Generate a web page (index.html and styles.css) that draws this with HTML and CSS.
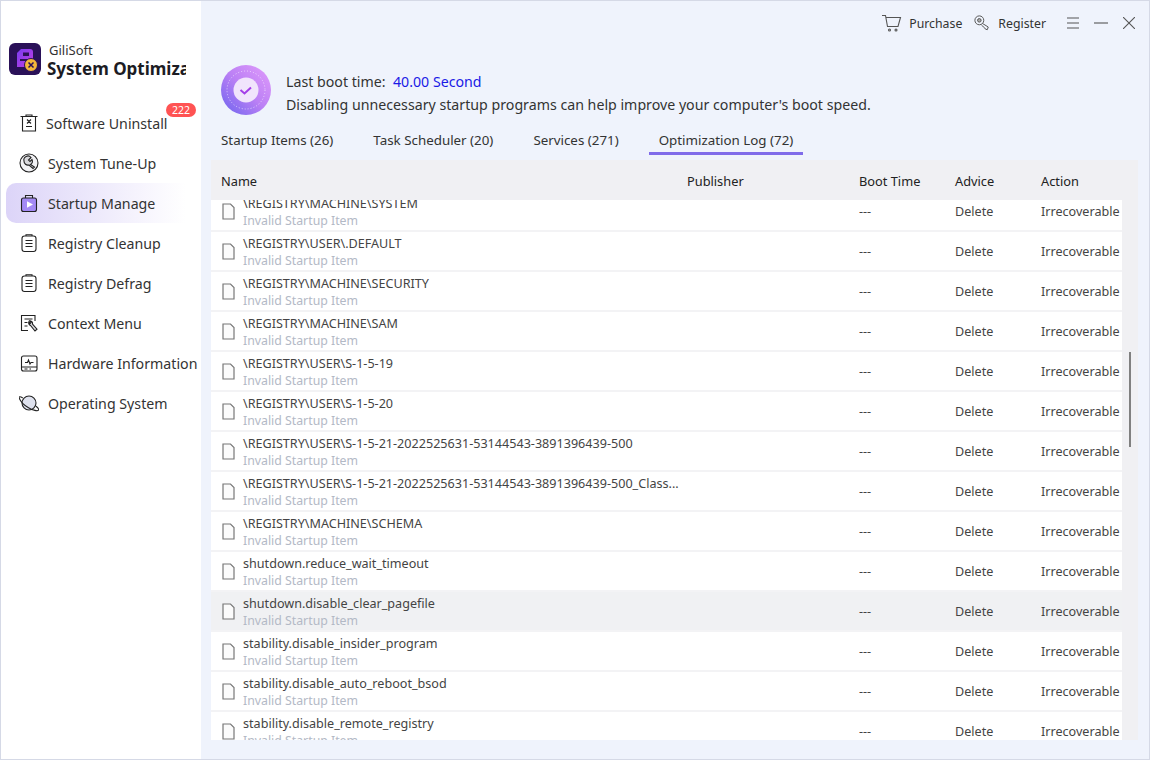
FILE: index.html
```html
<!DOCTYPE html>
<html>
<head>
  <meta charset="UTF-8">
  <link rel="stylesheet" href="styles.css">
</head>
<body>
  <svg class="sprites" width="0" height="0">
    <symbol id="file" viewBox="0 0 13 17"><path d="M1 1h7.500L12 4.500V16H1z" fill="#fbfbfb" stroke="#777" stroke-width="1.200"/></symbol>
  </svg>
  <div class="app">
    <aside class="sidebar">
      <div class="brand">
        <svg class="brand-logo" width="32" height="32" viewBox="0 0 32 32">
          <defs>
            <linearGradient id="doc" x1="0" y1="0" x2="1" y2="1">
              <stop offset="0" stop-color="#7a3cf2"/>
              <stop offset="1" stop-color="#c13fe0"/>
            </linearGradient>
          </defs>
          <rect width="32" height="32" rx="6" fill="#2a1158"/>
          <path d="M12 6h9a3 3 0 0 1 3 3v15H8V10z" fill="url(#doc)"/>
          <path d="M14 9.500h6v3.500h-6zM11 16h7v2h-7z" fill="#2a1158"/>
          <circle cx="22" cy="22" r="6.500" fill="#f3b73a" stroke="#2a1158"/>
          <path d="M19.500 19.500l5 5M24.500 19.500l-5 5" stroke="#2a1158" stroke-width="1.500"/>
        </svg>
        <div class="brand-text">
          <div class="brand-company">GiliSoft</div>
          <div class="brand-name">System Optimization</div>
        </div>
      </div>
      <nav class="nav">
        <a class="nav-item nav-first">
          <svg class="nav-icon" viewBox="0 0 20 20" fill="none" stroke="#222" stroke-width="1.100"><path d="M1.500 3.500h17M7 3.500V2h6v1.500M3.500 3.500V18h13V3.500M8 6.500l4 4M12 6.500l-4 4M7 13.500h6"/></svg>
          <span>Software Uninstall</span>
          <span class="badge">222</span>
        </a>
        <a class="nav-item">
          <svg class="nav-icon" viewBox="0 0 20 20" fill="none" stroke="#222" stroke-width="1.100"><circle cx="10" cy="10" r="9" fill="#f2f2f5"/><path d="M12 4.500L9.500 7 11 8.500l2-2a4 4 0 0 1-1.500 5l4 2.500-1.500 1.500-4-3.500A4 4 0 0 1 5 8a4 4 0 0 1 7-3.500z" fill="#d8d8dc"/></svg>
          <span>System Tune-Up</span>
        </a>
        <a class="nav-item active">
          <svg class="nav-icon" viewBox="0 0 20 20" fill="none" stroke="#222" stroke-width="1.100"><path d="M6.500 5V2.500h7V5"/><rect x="2.500" y="5" width="15" height="13.500" rx="2" fill="#a48af5"/><path d="M8 8.200l6 3.300-6 3.300z" fill="#fff" stroke="none"/></svg>
          <span>Startup Manage</span>
        </a>
        <a class="nav-item">
          <svg class="nav-icon" viewBox="0 0 20 20" fill="none" stroke="#222" stroke-width="1.100"><rect x="3" y="3" width="14" height="15.500" rx="2.500"/><path d="M7 3V1.800h6V3M6.500 7.500h7M6.500 10.500h7M6.500 13.500h7"/></svg>
          <span>Registry Cleanup</span>
        </a>
        <a class="nav-item">
          <svg class="nav-icon" viewBox="0 0 20 20" fill="none" stroke="#222" stroke-width="1.100"><rect x="3" y="3" width="14" height="15.500" rx="2.500"/><path d="M7 3V1.800h6V3M6.500 7.500h7M6.500 10.500h7M6.500 13.500h7"/></svg>
          <span>Registry Defrag</span>
        </a>
        <a class="nav-item">
          <svg class="nav-icon" viewBox="0 0 20 20" fill="none" stroke="#222" stroke-width="1.100"><path d="M16 8V2.500H2.500v15H9M5.500 6h8M5.500 9.500h3M5.500 13h3"/><path d="M10 8.500a2.800 2.800 0 0 0 1.500 4l4.500 5.500 2-1.800-4.500-5a2.800 2.800 0 0 0-2.500-3.500l1 2-1 1z" fill="#d8d8dc"/></svg>
          <span>Context Menu</span>
        </a>
        <a class="nav-item">
          <svg class="nav-icon" viewBox="0 0 20 20" fill="none" stroke="#222" stroke-width="1.100"><rect x="2.500" y="3" width="15.500" height="15" rx="2"/><path d="M2.500 14h15.500M5.500 16h3M10.500 16h1.500M6 9.500h2.500l1-2.500 1.500 4 1-1.500h2.500"/></svg>
          <span>Hardware Information</span>
        </a>
        <a class="nav-item">
          <svg class="nav-icon" viewBox="0 0 20 20" fill="none" stroke="#222" stroke-width="1.100"><circle cx="10" cy="10" r="7" fill="#dfe2ee"/><path d="M3.800 5C1 3.200-.3 3.300.3 5.200c1 3 4.800 7 9.200 9.500 4.500 2.600 9.300 3.800 10 2.300.4-1-.7-2.500-2.500-3.800"/></svg>
          <span>Operating System</span>
        </a>
      </nav>
    </aside>

    <main class="main">
      <header class="titlebar">
        <a class="title-link link-purchase">
          <svg width="20" height="18" viewBox="0 0 20 18" fill="none" stroke="#555" stroke-width="1.100"><path d="M0 1.500h3.500l2 11h10.500l2.500-9H4"/><circle cx="7.500" cy="16" r="1"/><circle cx="14" cy="16" r="1"/></svg>
          <span>Purchase</span>
        </a>
        <a class="title-link">
          <svg width="16" height="18" viewBox="0 0 18 18" fill="none" stroke="#555" stroke-width="1.100"><circle cx="6" cy="6" r="5"/><circle cx="6" cy="6" r="2" fill="#aaa"/><path d="M9.500 9.500l6.500 4-1 3-2-.5-1-1.500-3.500-3"/></svg>
          <span>Register</span>
        </a>
        <div class="win-buttons">
          <svg width="12" height="12" viewBox="0 0 12 12" stroke="#555" stroke-width="1.100"><path d="M0 1h12M0 6h12M0 11h12"/></svg>
          <svg width="14" height="12" viewBox="0 0 14 12" stroke="#555" stroke-width="1.100"><path d="M0 6h14"/></svg>
          <svg width="12" height="12" viewBox="0 0 12 12" stroke="#555" stroke-width="1.100"><path d="M0 0l12 12M12 0L0 12"/></svg>
        </div>
      </header>

      <section class="summary">
        <svg class="summary-icon" width="50" height="50" viewBox="0 0 50 50">
          <defs>
            <linearGradient id="ring" x1="0" y1="1" x2="1" y2="0">
              <stop offset="0" stop-color="#6a63ee"/>
              <stop offset="0.500" stop-color="#bb80f5"/>
              <stop offset="1" stop-color="#e29cfb"/>
            </linearGradient>
          </defs>
          <circle cx="25" cy="25" r="25" fill="url(#ring)"/>
          <circle cx="25" cy="25" r="19" fill="none" stroke="#fff" stroke-opacity=".6" stroke-dasharray="1 2"/>
          <circle cx="25" cy="25" r="12.500" fill="#f1e4fc"/>
          <path d="M19.500 25l4 3.500 6.500-6" fill="none" stroke="#a43de8" stroke-width="2"/>
        </svg>
        <div class="summary-text">
          <div>Last boot time:&nbsp; <span class="boot-value">40.00 Second</span></div>
          <div>Disabling unnecessary startup programs can help improve your computer's boot speed.</div>
        </div>
      </section>

      <div class="tabs">
        <a class="tab">Startup Items (26)</a>
        <a class="tab">Task Scheduler (20)</a>
        <a class="tab">Services (271)</a>
        <a class="tab active">Optimization Log (72)</a>
      </div>

      <section class="table">
        <div class="table-head">
          <div class="col-name">Name</div>
          <div class="col-publisher">Publisher</div>
          <div class="col-boot">Boot Time</div>
          <div class="col-advice">Advice</div>
          <div class="col-action">Action</div>
        </div>
        <div class="table-body">
          <div class="row">
            <div class="col-name cell-name"><svg class="file-icon"><use href="#file"/></svg><div><div class="item-name">\REGISTRY\MACHINE\SYSTEM</div><div class="item-sub">Invalid Startup Item</div></div></div>
            <div class="col-publisher"></div><div class="col-boot">---</div><div class="col-advice">Delete</div><div class="col-action">Irrecoverable</div>
          </div>
          <div class="row">
            <div class="col-name cell-name"><svg class="file-icon"><use href="#file"/></svg><div><div class="item-name">\REGISTRY\USER\.DEFAULT</div><div class="item-sub">Invalid Startup Item</div></div></div>
            <div class="col-publisher"></div><div class="col-boot">---</div><div class="col-advice">Delete</div><div class="col-action">Irrecoverable</div>
          </div>
          <div class="row">
            <div class="col-name cell-name"><svg class="file-icon"><use href="#file"/></svg><div><div class="item-name">\REGISTRY\MACHINE\SECURITY</div><div class="item-sub">Invalid Startup Item</div></div></div>
            <div class="col-publisher"></div><div class="col-boot">---</div><div class="col-advice">Delete</div><div class="col-action">Irrecoverable</div>
          </div>
          <div class="row">
            <div class="col-name cell-name"><svg class="file-icon"><use href="#file"/></svg><div><div class="item-name">\REGISTRY\MACHINE\SAM</div><div class="item-sub">Invalid Startup Item</div></div></div>
            <div class="col-publisher"></div><div class="col-boot">---</div><div class="col-advice">Delete</div><div class="col-action">Irrecoverable</div>
          </div>
          <div class="row">
            <div class="col-name cell-name"><svg class="file-icon"><use href="#file"/></svg><div><div class="item-name">\REGISTRY\USER\S-1-5-19</div><div class="item-sub">Invalid Startup Item</div></div></div>
            <div class="col-publisher"></div><div class="col-boot">---</div><div class="col-advice">Delete</div><div class="col-action">Irrecoverable</div>
          </div>
          <div class="row">
            <div class="col-name cell-name"><svg class="file-icon"><use href="#file"/></svg><div><div class="item-name">\REGISTRY\USER\S-1-5-20</div><div class="item-sub">Invalid Startup Item</div></div></div>
            <div class="col-publisher"></div><div class="col-boot">---</div><div class="col-advice">Delete</div><div class="col-action">Irrecoverable</div>
          </div>
          <div class="row">
            <div class="col-name cell-name"><svg class="file-icon"><use href="#file"/></svg><div><div class="item-name">\REGISTRY\USER\S-1-5-21-2022525631-53144543-3891396439-500</div><div class="item-sub">Invalid Startup Item</div></div></div>
            <div class="col-publisher"></div><div class="col-boot">---</div><div class="col-advice">Delete</div><div class="col-action">Irrecoverable</div>
          </div>
          <div class="row">
            <div class="col-name cell-name"><svg class="file-icon"><use href="#file"/></svg><div><div class="item-name">\REGISTRY\USER\S-1-5-21-2022525631-53144543-3891396439-500_Class...</div><div class="item-sub">Invalid Startup Item</div></div></div>
            <div class="col-publisher"></div><div class="col-boot">---</div><div class="col-advice">Delete</div><div class="col-action">Irrecoverable</div>
          </div>
          <div class="row">
            <div class="col-name cell-name"><svg class="file-icon"><use href="#file"/></svg><div><div class="item-name">\REGISTRY\MACHINE\SCHEMA</div><div class="item-sub">Invalid Startup Item</div></div></div>
            <div class="col-publisher"></div><div class="col-boot">---</div><div class="col-advice">Delete</div><div class="col-action">Irrecoverable</div>
          </div>
          <div class="row">
            <div class="col-name cell-name"><svg class="file-icon"><use href="#file"/></svg><div><div class="item-name">shutdown.reduce_wait_timeout</div><div class="item-sub">Invalid Startup Item</div></div></div>
            <div class="col-publisher"></div><div class="col-boot">---</div><div class="col-advice">Delete</div><div class="col-action">Irrecoverable</div>
          </div>
          <div class="row hover">
            <div class="col-name cell-name"><svg class="file-icon"><use href="#file"/></svg><div><div class="item-name">shutdown.disable_clear_pagefile</div><div class="item-sub">Invalid Startup Item</div></div></div>
            <div class="col-publisher"></div><div class="col-boot">---</div><div class="col-advice">Delete</div><div class="col-action">Irrecoverable</div>
          </div>
          <div class="row">
            <div class="col-name cell-name"><svg class="file-icon"><use href="#file"/></svg><div><div class="item-name">stability.disable_insider_program</div><div class="item-sub">Invalid Startup Item</div></div></div>
            <div class="col-publisher"></div><div class="col-boot">---</div><div class="col-advice">Delete</div><div class="col-action">Irrecoverable</div>
          </div>
          <div class="row">
            <div class="col-name cell-name"><svg class="file-icon"><use href="#file"/></svg><div><div class="item-name">stability.disable_auto_reboot_bsod</div><div class="item-sub">Invalid Startup Item</div></div></div>
            <div class="col-publisher"></div><div class="col-boot">---</div><div class="col-advice">Delete</div><div class="col-action">Irrecoverable</div>
          </div>
          <div class="row">
            <div class="col-name cell-name"><svg class="file-icon"><use href="#file"/></svg><div><div class="item-name">stability.disable_remote_registry</div><div class="item-sub">Invalid Startup Item</div></div></div>
            <div class="col-publisher"></div><div class="col-boot">---</div><div class="col-advice">Delete</div><div class="col-action">Irrecoverable</div>
          </div>
        </div>
        <div class="scrollbar"><div class="scroll-thumb"></div></div>
      </section>
    </main>
  </div>
</body>
</html>
```

FILE: styles.css
```css
* {
  box-sizing: border-box;
}

body {
  margin: 0;
  width: 1150px;
  height: 760px;
  overflow: hidden;
  font-family: "Noto Sans", "Noto Sans CJK SC", sans-serif;
  font-size: 14.2px;
  color: #333;
  background: #eff3fc;
}

.sprites {
  display: block;
}

.app {
  display: flex;
  height: 760px;
  border: 1px solid #d5d9e6;
}

.sidebar {
  width: 200px;
  flex-shrink: 0;
  background: #ffffff;
}

.brand {
  display: flex;
  align-items: flex-start;
  gap: 6px;
  padding: 42px 0 0 8px;
}

.brand-logo {
  flex-shrink: 0;
}

.brand-text {
  width: 139px;
  margin-top: -1px;
  overflow: hidden;
}

.brand-company {
  font-size: 13px;
  line-height: 17px;
  padding-left: 2px;
}

.brand-name {
  font-size: 17px;
  font-weight: 700;
  line-height: 20px;
  color: #1c1c24;
  white-space: nowrap;
}

.nav {
  padding: 24px 0 0 5px;
}

.nav-item {
  position: relative;
  display: flex;
  align-items: center;
  gap: 9px;
  height: 40px;
  padding-left: 13px;
  white-space: nowrap;
}

.nav-icon {
  width: 20px;
  height: 20px;
  flex-shrink: 0;
}

.nav-first {
  gap: 7px;
}

.nav-item.active {
  background: linear-gradient(90deg, #dcd4f8, #ffffff 92%);
  border-radius: 10px 0 0 10px;
}

.badge {
  position: absolute;
  left: 160px;
  top: 0;
  width: 30px;
  height: 14px;
  line-height: 14px;
  border-radius: 7px;
  background: #ff5353;
  color: #fff;
  font-size: 10.5px;
  text-align: center;
}

.main {
  flex: 1;
  min-width: 0;
  padding: 0 0 19px 10px;
  display: flex;
  flex-direction: column;
}

.titlebar {
  display: flex;
  justify-content: flex-end;
  align-items: center;
  height: 44px;
  flex-shrink: 0;
  gap: 12px;
  padding-right: 14px;
  font-size: 12.3px;
}

.title-link {
  display: flex;
  align-items: center;
  gap: 8px;
}

.link-purchase {
  gap: 7px;
}

.win-buttons {
  display: flex;
  gap: 15px;
  margin-left: 9px;
}

.summary {
  display: flex;
  align-items: flex-start;
  gap: 15px;
  flex-shrink: 0;
  padding: 20px 0 0 10px;
}

.summary-text {
  line-height: 23px;
  margin-top: 5px;
}

.boot-value {
  color: #1a1ae6;
}

.tabs {
  display: flex;
  flex-shrink: 0;
  height: 44px;
  padding-top: 9px;
  font-size: 13.35px;
}

.tab {
  height: 30px;
  line-height: 30px;
  padding: 0 10px;
  margin-right: 20px;
}

.tab.active {
  border-bottom: 3px solid #7f6bea;
}

.table {
  position: relative;
  flex: 1;
  min-height: 0;
  width: 927px;
  display: flex;
  flex-direction: column;
  background: #f0f0f3;
  overflow: hidden;
}

.table-head {
  display: flex;
  align-items: center;
  height: 40px;
  padding-top: 2px;
  flex-shrink: 0;
  color: #222;
  font-size: 12.8px;
}

.table-body {
  flex: 1;
  min-height: 0;
  overflow: hidden;
  width: 911px;
  background: #fff;
}

.row {
  display: flex;
  align-items: center;
  height: 40px;
  border-bottom: 2px solid #f3f3f5;
  font-size: 12.6px;
  color: #444;
}

.row:first-child {
  margin-top: -8px;
}

.row.hover {
  background: #f0f1f3;
}

.col-name {
  width: 476px;
  padding-left: 10px;
  flex-shrink: 0;
}

.col-publisher {
  width: 172px;
  flex-shrink: 0;
}

.col-boot {
  width: 96px;
  flex-shrink: 0;
}

.col-advice {
  width: 86px;
  flex-shrink: 0;
}

.col-action {
  white-space: nowrap;
}

.cell-name {
  display: flex;
  align-items: center;
  gap: 8px;
  padding-left: 11px;
}

.file-icon {
  width: 13px;
  height: 17px;
  flex-shrink: 0;
}

.item-name {
  padding-top: 3px;
  margin-bottom: -1px;
  line-height: 18px;
  white-space: nowrap;
}

.item-sub {
  font-size: 12.3px;
  line-height: 18px;
  color: #b3b9c6;
}

.scrollbar {
  position: absolute;
  right: 0;
  top: 40px;
  bottom: 0;
  width: 16px;
}

.scroll-thumb {
  position: absolute;
  left: 7px;
  top: 152px;
  width: 2px;
  height: 95px;
  background: #808080;
}
```
